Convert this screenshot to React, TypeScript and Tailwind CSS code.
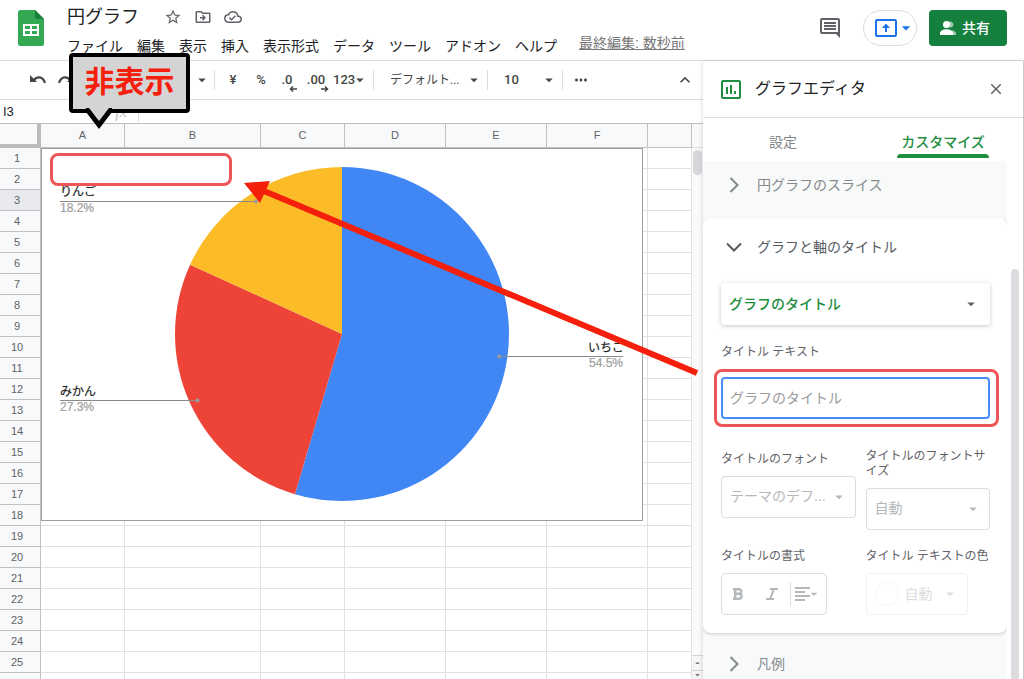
import { ReactNode } from 'react'
import clsx from 'clsx'
import {
  MdStarBorder,
  MdOutlineDriveFileMove,
  MdOutlineCloudDone,
  MdArrowDropDown,
  MdArrowDropUp,
  MdMoreHoriz,
  MdKeyboardArrowUp,
  MdClose,
} from 'react-icons/md'

const MENUS = ['ファイル', '編集', '表示', '挿入', '表示形式', 'データ', 'ツール', 'アドオン', 'ヘルプ']
const COLUMNS = ['A', 'B', 'C', 'D', 'E', 'F', '']
const ROWS = Array.from({ length: 26 }, (_, i) => i + 1)
const SELECTED_ROW = 3

const SLICES = [
  { label: 'いちご', value: 6, color: '#4086f4' },
  { label: 'みかん', value: 3, color: '#ee4337' },
  { label: 'りんご', value: 2, color: '#fbbc28' },
]

function slicePath(cx: number, cy: number, r: number, from: number, to: number) {
  const point = (t: number) => {
    const a = t * Math.PI * 2
    return `${cx + r * Math.sin(a)} ${cy - r * Math.cos(a)}`
  }
  const large = to - from > 0.5 ? 1 : 0
  return `M${cx} ${cy} L${point(from)} A${r} ${r} 0 ${large} 1 ${point(to)} Z`
}

function PieChart() {
  const total = SLICES.reduce((sum, s) => sum + s.value, 0)
  let acc = 0

  return (
    <svg width="600" height="371" viewBox="0 0 600 371" className="block">
      {SLICES.map((s) => {
        const from = acc / total
        acc += s.value
        return <path key={s.label} d={slicePath(300, 185, 167, from, acc / total)} fill={s.color} />
      })}

      <g stroke="#8a8a8a" strokeWidth="1">
        <path d="M18 52.5H214" />
        <path d="M18 251.5H155" />
        <path d="M457 207.5H581" />
      </g>
      <g fill="#9a9a9a">
        <circle cx="214" cy="52.5" r="2" />
        <circle cx="155.5" cy="251.5" r="2" />
        <circle cx="457" cy="207.5" r="2" />
      </g>

      <g fontSize="12" fill="#222" stroke="#222" strokeWidth="0.2">
        <text x="18" y="47">りんご</text>
        <text x="18" y="247">みかん</text>
        <text x="582" y="203" textAnchor="end">いちご</text>
      </g>
      <g fontSize="12" fill="#9e9e9e" stroke="#9e9e9e" strokeWidth="0.2" className="font-['Liberation_Sans',sans-serif]">
        <text x="18" y="63">18.2%</text>
        <text x="18" y="262">27.3%</text>
        <text x="581" y="218" textAnchor="end">54.5%</text>
      </g>
    </svg>
  )
}

function SheetsLogo() {
  return (
    <svg width="26" height="36" viewBox="0 0 26 36">
      <path d="M2.5 0H17l9 9v24.5a2.5 2.5 0 0 1-2.5 2.5h-21A2.5 2.5 0 0 1 0 33.5v-31A2.5 2.5 0 0 1 2.5 0z" fill="#34a853" />
      <path d="M17 0l9 9h-6.5A2.5 2.5 0 0 1 17 6.500z" fill="#188038" />
      <path d="M5 14h16v12H5zM7 16v3h5v-3zM14 16v3h5v-3zM7 21v3h5v-3zM14 21v3h5v-3z" fill="#fff" fillRule="evenodd" />
    </svg>
  )
}

function UndoIcon({ flip }: { flip?: boolean }) {
  return (
    <svg width="16" height="12" viewBox="0 0 16 12" className={flip ? '-scale-x-100' : ''}>
      <path d="M0 1v7h7z" fill="currentColor" />
      <path d="M3.500 6.500C7 1.500 13 2.500 15 9" fill="none" stroke="currentColor" strokeWidth="2.200" />
    </svg>
  )
}

function ChartIcon() {
  return (
    <svg width="20" height="19" viewBox="0 0 20 19" fill="none" stroke="currentColor" strokeWidth="2">
      <rect x="1" y="1" width="18" height="17" rx="1" />
      <path d="M6 7v7M10 5v9M14 11v3" />
    </svg>
  )
}

function Header() {
  return (
    <header className="flex h-[61px] shrink-0 border-b border-[#dadce0] pl-[18px] pr-[17px]">
      <div className="pt-2.5">
        <SheetsLogo />
      </div>
      <div className="ml-[23px] min-w-0 flex-1">
        <div className="flex h-[34px] items-center text-[#5f6368]">
          <h1 className="mr-[25px] text-lg text-[#202124]">円グラフ</h1>
          <div className="flex gap-3">
            <button type="button" aria-label="スターを付ける"><MdStarBorder size={18} /></button>
            <button type="button" aria-label="移動"><MdOutlineDriveFileMove size={18} /></button>
            <button type="button" aria-label="保存状態"><MdOutlineCloudDone size={18} /></button>
          </div>
        </div>
        <nav className="flex h-6 gap-3.5 whitespace-nowrap text-sm leading-[22px] text-[#202124]">
          {MENUS.map((m) => (
            <button key={m} type="button">{m}</button>
          ))}
          <a href="#history" className="ml-2 leading-[18px] text-[#777] underline">最終編集: 数秒前</a>
        </nav>
      </div>
      <div className="flex h-14 items-center">
        <button type="button" aria-label="コメント" className="mr-[23px]">
          <svg width="20" height="20" viewBox="0 0 20 20" fill="#5f6368">
            <path d="M2 0h16a2 2 0 0 1 2 2v18l-4-4H2a2 2 0 0 1-2-2V2a2 2 0 0 1 2-2zm0 2v12h16V2z" fillRule="evenodd" />
            <path d="M4 4h12v2H4zM4 7h12v2H4zM4 10h12v2H4z" />
          </svg>
        </button>
        <button type="button" aria-label="画面共有" className="mr-3 flex h-9 w-[54px] items-center rounded-full border border-[#dadce0] pl-[11px] text-[#1a73e8]">
          <svg width="22" height="18" viewBox="0 0 22 18">
            <rect x="1" y="1" width="20" height="16" rx="1" fill="none" stroke="currentColor" strokeWidth="2" />
            <path d="M10 8h2v5h-2zM11 4.500l4 4.500H7z" fill="currentColor" />
          </svg>
          <MdArrowDropDown size={20} className="-ml-px" />
        </button>
        <button type="button" className="flex h-9 items-center gap-1.5 rounded bg-[#15803d] pl-[11px] pr-[17px] text-sm font-medium text-white">
          <svg width="16" height="14" viewBox="0 0 16 14" fill="#fff">
            <path d="M8.500 1.200a3 3 0 1 1 1.500 5.300zM12 9c2.500.8 4 1.800 4 3.500V14h-3z" opacity="0.6" />
            <circle cx="6.500" cy="3.500" r="3.500" />
            <path d="M0 14v-2c0-2.400 3.500-3.800 6.500-3.800s6.500 1.400 6.500 3.800v2z" />
          </svg>
          共有
        </button>
      </div>
    </header>
  )
}

function ToolButton({ label, className, children }: { label: string; className: string; children: ReactNode }) {
  return (
    <button type="button" aria-label={label} className={clsx('flex h-7 shrink-0 items-center whitespace-nowrap', className)}>
      {children}
    </button>
  )
}

function Separator() {
  return <span className="h-5 w-px shrink-0 bg-[#dadce0]" />
}

function DecimalIcon({ text, right }: { text: string; right?: boolean }) {
  return (
    <span className="relative">
      {text}
      <svg width="8" height="6" viewBox="0 0 8 6" className={clsx('absolute -bottom-0.5 -right-1', right && 'rotate-180')}>
        <path d="M8 3H1.500M4 .500L1.500 3L4 5.500" stroke="currentColor" strokeWidth="1.500" fill="none" />
      </svg>
    </span>
  )
}

function Toolbar() {
  return (
    <div className="relative flex h-[39px] shrink-0 items-center border-b border-[#dadce0] pl-6 pr-2 font-['Roboto','Noto_Sans_CJK_JP',sans-serif] text-[13px] font-medium text-[#444746]">
      <ToolButton label="元に戻す" className="w-7 justify-center"><UndoIcon /></ToolButton>
      <ToolButton label="やり直す" className="w-7 justify-center"><UndoIcon flip /></ToolButton>
      <ToolButton label="ズーム" className="ml-auto w-5 justify-center"><MdArrowDropDown size={18} /></ToolButton>
      <span className="w-0.5" />
      <Separator />
      <ToolButton label="通貨" className="ml-1 w-7 justify-center">¥</ToolButton>
      <ToolButton label="パーセント" className="w-7 justify-center">%</ToolButton>
      <ToolButton label="小数点以下の桁数を減らす" className="w-6 justify-center"><DecimalIcon text=".0" /></ToolButton>
      <ToolButton label="小数点以下の桁数を増やす" className="w-[34px] justify-center"><DecimalIcon text=".00" right /></ToolButton>
      <ToolButton label="表示形式の詳細" className="w-9 justify-center">
        123<MdArrowDropDown size={18} className="-ml-1" />
      </ToolButton>
      <span className="w-1" />
      <Separator />
      <ToolButton label="フォント" className="ml-4 w-[93px] justify-between font-normal">
        <span className="text-xs">デフォルト...</span>
        <MdArrowDropDown size={18} />
      </ToolButton>
      <span className="w-1" />
      <Separator />
      <ToolButton label="フォントサイズ" className="ml-4 w-[54px] justify-between">
        10<MdArrowDropDown size={18} />
      </ToolButton>
      <span className="w-1" />
      <Separator />
      <ToolButton label="その他" className="ml-2 w-5 justify-center"><MdMoreHoriz size={18} /></ToolButton>
      <ToolButton label="メニューを非表示" className="ml-[84px] w-5 justify-center"><MdKeyboardArrowUp size={20} /></ToolButton>

      <Callout />
    </div>
  )
}

function Callout() {
  return (
    <div className="absolute -top-2 left-[69px] z-20 h-[60px] w-[121px] rounded border-4 border-black bg-[#d4d4d4] text-center text-[30px] font-bold leading-[50px] text-[#f5200c]">
      非表示
      <svg width="26" height="21" viewBox="0 0 26 21" className="absolute -bottom-5 left-[13px]">
        <path d="M0 0H26V4L13 21L0 4z" fill="#000" />
        <path d="M3 0H23L13 13z" fill="#d4d4d4" />
      </svg>
    </div>
  )
}

function FormulaBar() {
  return (
    <div className="flex h-[23px] shrink-0 items-center text-[13px]">
      <input aria-label="名前ボックス" defaultValue="I3" className="w-[104px] pl-[3px] text-[#202124] outline-none" />
      <span className="w-[34px] text-center font-['Liberation_Serif',serif] text-base italic text-[#c0c0c0]">fx</span>
      <Separator />
      <input aria-label="数式" className="min-w-0 flex-1 outline-none" />
    </div>
  )
}

function Grid() {
  return (
    <div className="relative min-w-0 flex-1 overflow-hidden">
      <table className="w-full table-fixed border-separate border-spacing-0 font-['Liberation_Sans',sans-serif] text-[11px] text-[#5f6368]">
        <colgroup>
          <col className="w-[41px]" />
          <col className="w-[84px]" />
          <col className="w-[136px]" />
          <col className="w-[84px]" />
          <col className="w-[101px]" />
          <col className="w-[101px]" />
          <col className="w-[101px]" />
          <col />
        </colgroup>
        <thead>
          <tr className="h-[25px] bg-[#f8f9fa]">
            <th aria-label="すべて選択" className="border-b-4 border-r-4 border-t border-[#bcbcbc] border-t-[#c0c0c0] p-0" />
            {COLUMNS.map((c, i) => (
              <th key={i} scope="col" className="border-b border-r border-t border-[#c0c0c0] p-0 font-normal">{c}</th>
            ))}
          </tr>
        </thead>
        <tbody>
          {ROWS.map((r) => (
            <tr key={r} className="h-[21px]">
              <th
                scope="row"
                className={clsx(
                  'border-b border-r border-[#c0c0c0] p-0 pr-1.5 font-normal',
                  r === SELECTED_ROW ? 'bg-[#e8eaed]' : 'bg-[#f8f9fa]'
                )}
              >
                {r}
              </th>
              {COLUMNS.map((_, i) => (
                <td key={i} className="border-b border-r border-[#e1e1e1] p-0" />
              ))}
            </tr>
          ))}
        </tbody>
      </table>

      {/* chart floats above the cells */}
      <div className="absolute left-[41px] top-[25px] border border-[#9e9e9e] bg-white">
        <PieChart />
        <div className="absolute left-2 top-1 h-[33px] w-[182px] rounded-lg border-[3px] border-[#ee5556]" />
      </div>
    </div>
  )
}

function SheetScrollbar() {
  return (
    <div className="flex w-[11px] shrink-0 flex-col border-t border-[#c0c0c0] bg-[#fafafa] text-[#777]">
      <div className="h-6 border-b border-[#dadce0] bg-[#f8f9fa]" />
      <div className="mx-px mt-0.5 h-[25px] rounded-full bg-[#d5d7db]" />
      <div className="mt-auto flex h-4 items-center justify-center border-y border-[#d5d5d5] bg-[#f5f5f5]">
        <MdArrowDropUp size={12} />
      </div>
      <div className="flex h-2 items-center justify-center overflow-hidden bg-[#f5f5f5]">
        <MdArrowDropDown size={12} />
      </div>
    </div>
  )
}

function Chevron({ open }: { open?: boolean }) {
  return (
    <svg width="18" height="18" viewBox="0 0 18 18" fill="none" stroke="currentColor" strokeWidth="2" className={open ? 'rotate-90' : ''}>
      <path d="M5.500 2L12.500 9L5.500 16" />
    </svg>
  )
}

function SectionHeader({ title, open }: { title: string; open?: boolean }) {
  return (
    <button
      type="button"
      aria-expanded={!!open}
      className={clsx('flex w-full items-center gap-3.5 pl-[22px] text-sm', open ? 'h-[57px] text-[#555a5f]' : 'h-12 text-[#85898d]')}
    >
      <Chevron open={open} />
      {title}
    </button>
  )
}

function Field({ id, label, children, className }: { id: string; label: string; children: ReactNode; className?: string }) {
  return (
    <div className={className}>
      <label htmlFor={id} className="mb-[9px] block text-xs leading-[15px] text-[#5f6368]">{label}</label>
      {children}
    </div>
  )
}

function Dropdown({ id, value }: { id: string; value: string }) {
  return (
    <div className="relative">
      <select id={id} disabled className="block h-[42px] w-full appearance-none rounded border border-[#dadce0] bg-white pb-0.5 pl-2 text-sm text-[#b5b8bb] opacity-100">
        <option>{value}</option>
      </select>
      <MdArrowDropDown size={18} className="pointer-events-none absolute right-2 top-3 text-[#b5b8bb]" />
    </div>
  )
}

function TitleSettings() {
  return (
    <section className="rounded-lg bg-white pb-[18px] shadow-[0_1px_3px_rgba(60,64,67,0.25)]">
      <SectionHeader title="グラフと軸のタイトル" open />
      <div className="pl-[18px] pr-[17px] pt-2">
        <div className="relative">
          <select aria-label="タイトルの種類" className="block h-[42px] w-full appearance-none rounded bg-white pl-2 text-sm font-medium text-[#1e8e3e] shadow-[0_1px_4px_rgba(60,64,67,0.3)]">
            <option>グラフのタイトル</option>
          </select>
          <MdArrowDropDown size={18} className="pointer-events-none absolute right-2.5 top-3 text-[#5f6368]" />
        </div>

        <Field id="title-text" label="タイトル テキスト" className="mt-5">
          <div className="relative mt-[17px]">
            <input
              id="title-text"
              type="text"
              placeholder="グラフのタイトル"
              className="block h-[42px] w-full rounded border-2 border-[#4a8df6] px-[7px] text-sm outline-none placeholder:text-[#9a9a9a]"
            />
            <div className="pointer-events-none absolute -bottom-2 -left-[7px] -right-[9px] -top-2 rounded-lg border-[3px] border-[#ee5556]" />
          </div>
        </Field>

        <div className="mt-[30px] grid grid-cols-[134fr_124fr] gap-x-2.5 gap-y-[19px]">
          <Field id="title-font" label="タイトルのフォント" className="pt-[3px]">
            <Dropdown id="title-font" value="テーマのデフ..." />
          </Field>
          <Field id="title-size" label="タイトルのフォントサイズ">
            <Dropdown id="title-size" value="自動" />
          </Field>

          <div>
            <div id="format-label" className="mb-[9px] text-xs leading-[15px] text-[#5f6368]">タイトルの書式</div>
            <div role="group" aria-labelledby="format-label" className="flex h-[42px] w-[106px] items-center rounded border border-[#dadce0] text-[#b5b8bb]">
              <button type="button" disabled aria-label="太字" className="flex w-8 justify-center">
                <svg width="10" height="12" viewBox="0 0 10 12" fill="none" stroke="currentColor" strokeWidth="2.400">
                  <path d="M0 1.200H6a2.200 2.200 0 0 1 0 4.500H2M6 5.700a2.500 2.500 0 0 1 0 5.100H0M2.200 1v10" />
                </svg>
              </button>
              <button type="button" disabled aria-label="斜体" className="flex w-9 justify-center">
                <svg width="12" height="12" viewBox="0 0 12 12" fill="none" stroke="currentColor" strokeWidth="2">
                  <path d="M4 1h8M0 11h8M8 1L4 11" />
                </svg>
              </button>
              <span className="h-6 w-px bg-[#dadce0]" />
              <button type="button" disabled aria-label="配置" className="flex flex-1 items-center justify-center">
                <svg width="15" height="14" viewBox="0 0 15 14" stroke="currentColor" strokeWidth="2">
                  <path d="M0 1h15M0 5h10M0 9h15M0 13h10" />
                </svg>
                <MdArrowDropDown size={16} className="-ml-1" />
              </button>
            </div>
          </div>

          <div>
            <div id="color-label" className="mb-[9px] whitespace-nowrap text-xs leading-[15px] text-[#5f6368]">タイトル テキストの色</div>
            <button type="button" disabled aria-labelledby="color-label" className="flex h-[42px] w-[102px] items-center rounded border border-[#f1f1f2] pl-2 text-sm text-[#dcdddf]">
              <span className="mr-1.5 h-6 w-6 rounded-full border border-[#f6f6f6]" />
              自動
              <MdArrowDropDown size={18} className="ml-2" />
            </button>
          </div>
        </div>
      </div>
    </section>
  )
}

function ChartEditor() {
  return (
    <aside className="z-10 flex w-[321px] shrink-0 flex-col border-r border-[#c8cacd] bg-white shadow-[-1px_0_4px_rgba(60,64,67,0.15)]">
      <div className="flex h-[57px] shrink-0 items-center border-b border-[#dadce0] pl-[18px] pr-[18px] text-[#5f6368]">
        <span className="text-[#1e8e3e]"><ChartIcon /></span>
        <h2 className="ml-3.5 flex-1 text-base text-[#202124]">グラフエディタ</h2>
        <button type="button" aria-label="閉じる"><MdClose size={18} /></button>
      </div>

      <div role="tablist" className="grid h-[43px] shrink-0 grid-cols-2 pb-[3px] text-sm">
        <button type="button" role="tab" aria-selected="false" className="pt-2 text-[#80868b]">設定</button>
        <button type="button" role="tab" aria-selected="true" className="flex flex-col items-center justify-between pt-3.5 font-medium text-[#1e8e3e]">
          <span className="leading-5">カスタマイズ</span>
          <span className="h-1 w-[92px] rounded-t bg-[#1e8e3e]" />
        </button>
      </div>

      <div className="flex min-h-0 flex-1">
        <div className="min-w-0 flex-1 overflow-hidden bg-[#f8f9f9]">
          <div className="pb-[9px]">
            <SectionHeader title="円グラフのスライス" />
          </div>
          <TitleSettings />
          <div className="pt-[7px]">
            <SectionHeader title="凡例" />
          </div>
        </div>
        <div className="w-4 shrink-0 pl-1 pr-1 pt-[108px]">
          <div className="h-full rounded-t-full bg-[#dadce0]" />
        </div>
      </div>
    </aside>
  )
}

export default function App() {
  return (
    <div className="relative flex h-screen flex-col overflow-hidden bg-white font-['Liberation_Sans','Noto_Sans_CJK_JP',sans-serif]">
      <Header />
      <div className="flex min-h-0 flex-1">
        <main className="flex min-w-0 flex-1 flex-col">
          <Toolbar />
          <FormulaBar />
          <div className="flex min-h-0 flex-1">
            <Grid />
            <SheetScrollbar />
          </div>
        </main>
        <ChartEditor />
      </div>

      {/* arrow from the title field to the empty title area */}
      <svg width="460" height="200" viewBox="0 0 460 200" className="pointer-events-none absolute left-[242px] top-[180px] z-20" fill="#f5200c">
        <path d="M455 193L22 11" stroke="#f5200c" strokeWidth="6" />
        <path d="M2 3L28 1L18 23z" />
      </svg>
    </div>
  )
}
